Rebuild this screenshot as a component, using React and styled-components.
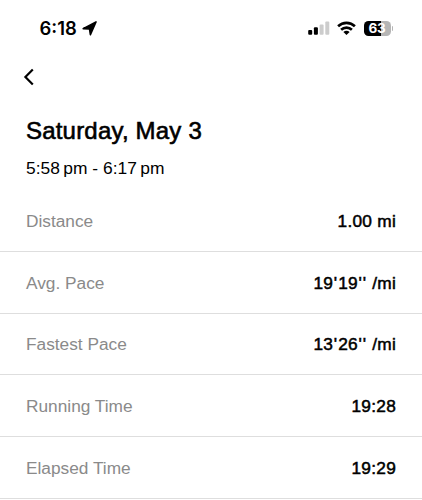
import styled, { createGlobalStyle } from "styled-components";

const stats = [
  { label: "Distance", value: "1.00 mi" },
  { label: "Avg. Pace", value: "19'19'' /mi" },
  { label: "Fastest Pace", value: "13'26'' /mi" },
  { label: "Running Time", value: "19:28" },
  { label: "Elapsed Time", value: "19:29" },
];

const LocationIcon = () => (
  <svg width="15" height="15" viewBox="0 0 15 15">
    <path
      d="M14 0.9 8.4 13.7 7.5 8 1.2 7.6Z"
      fill="#000"
      stroke="#000"
      strokeWidth="1.6"
      strokeLinejoin="round"
    />
  </svg>
);

const SignalIcon = () => (
  <svg width="22" height="14" viewBox="0 0 22 14">
    <rect x="0.2" y="9" width="4" height="4.8" rx="1" fill="#000" />
    <rect x="5.9" y="6.2" width="4" height="7.6" rx="1" fill="#000" />
    <rect x="11.6" y="3.4" width="4" height="10.4" rx="1" fill="#ccc" />
    <rect x="17.3" y="0.6" width="4" height="13.2" rx="1" fill="#ccc" />
  </svg>
);

const WifiIcon = () => (
  <svg width="19" height="14" viewBox="0 0 19 14">
    <g fill="none" stroke="#000" strokeWidth="2.6">
      <path d="M1.1 5.3C5.8.7 13.2.7 17.9 5.3" />
      <path d="M4.1 8.8c3-2.9 7.8-2.9 10.8 0" />
    </g>
    <path d="M9.5 14 6.4 11c1.7-1.6 4.5-1.6 6.2 0Z" fill="#000" />
  </svg>
);

const BackIcon = () => (
  <svg width="12" height="18" viewBox="0 0 12 18">
    <path
      d="M9.8 1.5 2.4 9l7.4 7.5"
      fill="none"
      stroke="#000"
      strokeWidth="2.2"
    />
  </svg>
);

const App = () => {
  return (
    <>
      <GlobalStyle />
      <Screen>
        <StatusBar>
          <Clock>
            <span>6:18</span>
            <LocationIcon />
          </Clock>
          <Indicators>
            <SignalIcon />
            <WifiIcon />
            <Battery>
              <BatteryBody>63</BatteryBody>
              <BatteryCap />
            </Battery>
          </Indicators>
        </StatusBar>
        <BackButton aria-label="Back">
          <BackIcon />
        </BackButton>
        <Header>
          <Title>Saturday, May 3</Title>
          <TimeRange>
            5:58{"\u2009"}pm - 6:17{"\u2009"}pm
          </TimeRange>
        </Header>
        <StatList>
          {stats.map(({ label, value }) => (
            <StatRow key={label}>
              <Label>{label}</Label>
              <Value>
                {value
                  .split(/('+)/)
                  .map((part, i) =>
                    part.startsWith("'") ? <Tick key={i}>{part}</Tick> : part
                  )}
              </Value>
            </StatRow>
          ))}
        </StatList>
      </Screen>
    </>
  );
};

export default App;

const GlobalStyle = createGlobalStyle`
  * {
    box-sizing: border-box;
  }

  body {
    margin: 0;
    background: #fff;
    color: #000;
    font-family: "Liberation Sans", Arial, sans-serif;
    overflow: hidden;
  }
`;

const Screen = styled.main`
  width: 422px;
  height: 500px;
  overflow: hidden;
`;

const StatusBar = styled.div`
  display: flex;
  align-items: center;
  justify-content: space-between;
  height: 56px;
  padding: 0 29px 0 39.5px;
`;

const Clock = styled.div`
  display: flex;
  align-items: center;
  gap: 5px;
  font-family: Inter, sans-serif;
  font-size: 18.4px;
  font-weight: 600;
`;

const Indicators = styled.div`
  display: flex;
  align-items: center;
  gap: 7.5px;
`;

const Battery = styled.div`
  display: flex;
  align-items: center;
  gap: 1px;
`;

const BatteryBody = styled.div`
  width: 27px;
  height: 15px;
  border-radius: 4.5px;
  background: linear-gradient(90deg, #000 63%, #b5b5b5 63%);
  color: #fff;
  font-family: Inter, sans-serif;
  font-size: 13.5px;
  font-weight: 700;
  letter-spacing: -0.3px;
  line-height: 15px;
  text-align: center;
`;

const BatteryCap = styled.div`
  width: 1.5px;
  height: 5px;
  border-radius: 0 2px 2px 0;
  background: #b5b5b5;
`;

const BackButton = styled.button`
  display: flex;
  margin: 12px 0 0 23px;
  padding: 0;
  border: 0;
  background: none;
`;

const Header = styled.header`
  padding: 30px 26px 0;
`;

const Title = styled.h1`
  margin: 0;
  font-size: 24px;
  font-weight: 400;
  letter-spacing: 0.2px;
  line-height: 30px;
  -webkit-text-stroke: 0.6px #000;
`;

const TimeRange = styled.p`
  margin: 11px 0 0;
  font-size: 17.4px;
  line-height: 22px;
`;

const StatList = styled.div`
  padding-top: 11px;
`;

const StatRow = styled.div`
  display: flex;
  align-items: center;
  justify-content: space-between;
  height: 61.75px;
  padding: 2px 26px 0;
  border-bottom: 1px solid #dedede;
`;

const Label = styled.span`
  color: #8a8a8a;
  font-size: 17.3px;
`;

const Value = styled.span`
  font-size: 17.3px;
  letter-spacing: 0.25px;
  -webkit-text-stroke: 0.5px #000;
`;

const Tick = styled.span`
  margin-left: 0.7px;
  letter-spacing: 1px;
`;
